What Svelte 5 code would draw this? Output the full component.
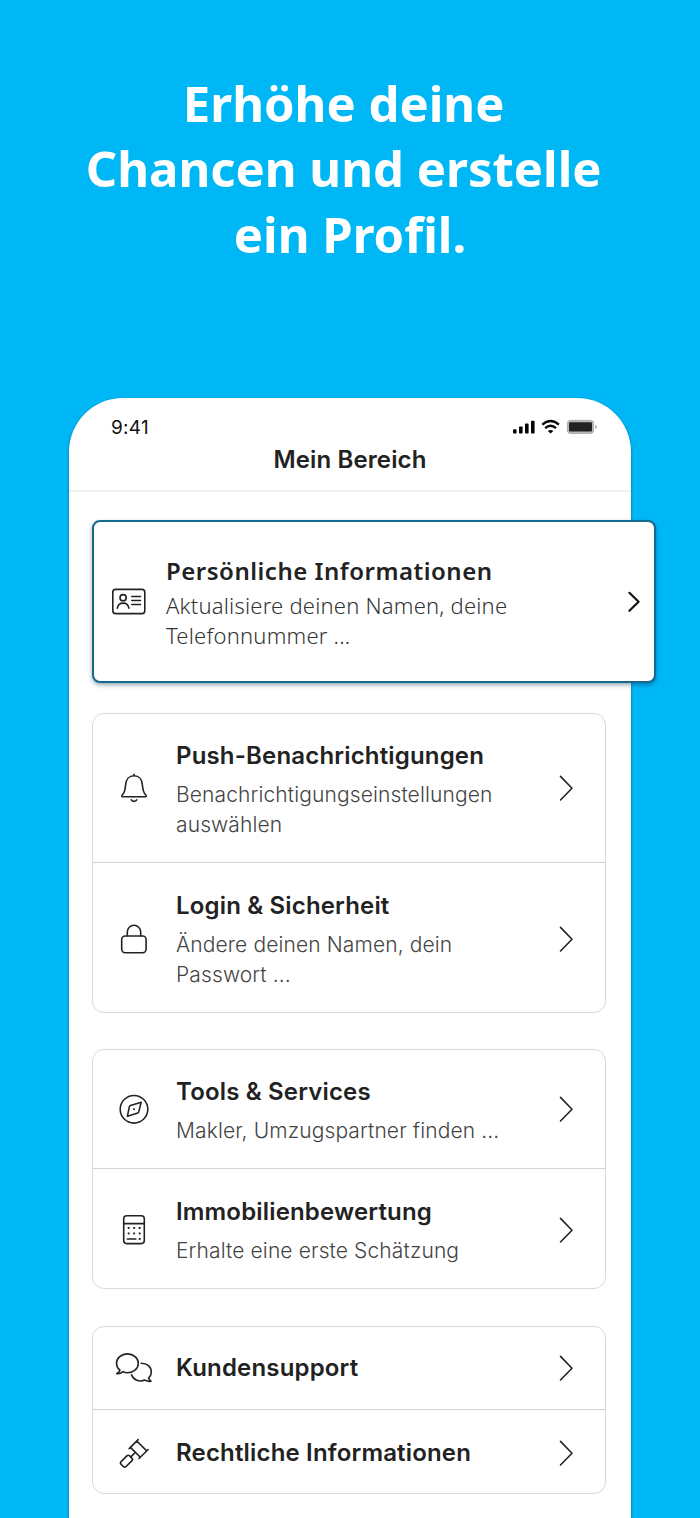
<script lang="ts">
    type Item = {
        icon: string;
        title: string;
        lines?: string[];
    };

    const headline = ["Erhöhe deine\u00a0", "Chancen und erstelle\u00a0", "ein Profil."];

    const groups: Item[][] = [
        [
            {
                icon: "bell",
                title: "Push-Benachrichtigungen",
                lines: ["Benachrichtigungseinstellungen", "auswählen"],
            },
            {
                icon: "lock",
                title: "Login & Sicherheit",
                lines: ["Ändere deinen Namen, dein", "Passwort ..."],
            },
        ],
        [
            {
                icon: "compass",
                title: "Tools & Services",
                lines: ["Makler, Umzugspartner finden ..."],
            },
            {
                icon: "calculator",
                title: "Immobilienbewertung",
                lines: ["Erhalte eine erste Schätzung"],
            },
        ],
        [
            { icon: "chat", title: "Kundensupport" },
            { icon: "gavel", title: "Rechtliche Informationen" },
        ],
    ];
</script>

{#snippet icon(name: string)}
    <svg class="icon" viewBox="0 0 36 36">
        {#if name === "bell"}
            <path d="M18 4.2v1.5M6.6 26.7C5.6 26.7 5.5 25.7 6.2 25C8.7 22.7 9.2 20.5 9.6 15C9.9 9.2 13.2 5.8 18 5.8S26.1 9.2 26.4 15C26.8 20.5 27.3 22.7 29.8 25C30.5 25.7 30.4 26.7 29.4 26.7Z" />
            <path d="M15.2 29.8C16 31.9 20 31.9 20.8 29.8" />
        {:else if name === "lock"}
            <rect x="5.7" y="15" width="24.4" height="16.7" rx="3.4" />
            <path d="M11.3 14.8V11a6.7 6.7 0 0 1 13.4 0v3.8" />
        {:else if name === "compass"}
            <circle cx="18" cy="18.3" r="13.8" />
            <path d="M25.2 11.2L22.7 20.9Q22.5 21.7 21.8 22.1L11.4 25.2L13.4 15.7Q13.6 14.8 14.5 14.4Z" />
            <circle class="solid" cx="18" cy="18.3" r="1" />
        {:else if name === "calculator"}
            <rect x="7.7" y="3.8" width="20.6" height="27.8" rx="3" />
            <path d="M7.7 11.6h20.6M11.3 27h8.6" />
            <g class="solid">
                {#each [15.9, 21.4] as y}
                    {#each [11.7, 17.2, 22.7] as x}
                        <rect {x} y={y - 0.9} width="1.9" height="1.9" />
                    {/each}
                {/each}
                <rect x="22.7" y="26" width="1.9" height="1.9" />
            </g>
        {:else if name === "chat"}
            <path d="M3.9 20.2C1.8 18.5 .5 16.2 .5 13.3C.5 8.1 5.3 3.9 11.4 3.9S22.3 8.1 22.3 13.3S17.8 22.7 11.7 22.7C9.9 22.7 8.4 22.3 7 21.6C5 23.3 2.8 23.9 .8 23.6Q3.2 22.6 3.9 20.2Z" />
            <path d="M25.3 13.2C31 13.2 35.3 17 35.3 22C35.3 24.5 34.2 26.6 32.6 28Q33 30 35 31.2C32.9 31.6 30.8 31.2 29 30.1C23.3 32.3 17.2 30 15.5 24.8" />
        {:else}
            <g transform="rotate(45 21 15)">
                <path d="M14.5 6.8v12.8M28.5 6.8v12.8M14.5 8.8h14M14.5 17.8h14M21.5 18v6.2" />
                <rect x="18" y="24.4" width="7" height="12" rx="2" />
            </g>
        {/if}
    </svg>
{/snippet}

<main class="page">
    <h1>
        {#each headline as line}
            <span>{line}</span>
        {/each}
    </h1>

    <div class="phone">
        <header>
            <div class="status">
                <span>9:41</span>
                <svg class="signals" viewBox="0 0 86 18">
                    <rect x="0" y="11.2" width="3.6" height="4.4" rx=".8" />
                    <rect x="6" y="8.4" width="3.6" height="7.2" rx=".8" />
                    <rect x="12" y="5.6" width="3.6" height="10" rx=".8" />
                    <rect x="18" y="2.7" width="3.6" height="12.9" rx=".8" />
                    <g class="waves">
                        <path d="M29.3 6.7Q37.6-.6 45.9 6.7" />
                        <path d="M32.2 10.1Q37.6 5.4 43 10.1" />
                    </g>
                    <path d="M34.8 12.9Q37.6 10.9 40.4 12.9L37.6 15.6Z" />
                    <rect class="shell" x="54.4" y="2.4" width="26.2" height="13" rx="3" />
                    <rect class="charge" x="56" y="4.2" width="23" height="9.4" rx="1" />
                    <path class="tip" d="M82.2 7v4q1.8-.5 1.8-2T82.2 7Z" />
                </svg>
            </div>
            <h2>Mein Bereich</h2>
        </header>

        <section class="featured">
            <svg class="card-icon" viewBox="0 0 36 28">
                <rect x="1.8" y="1.4" width="32" height="24.2" rx="2.8" />
                <circle cx="12.1" cy="9.7" r="3.1" />
                <path d="M6.3 20.2C6.9 16.7 9.1 15.1 12.1 15.1S17.3 16.7 17.9 20.2M20.8 8.5h8.7M20.8 12.5h8.7M20.8 16.5h8.7" />
            </svg>
            <div class="text">
                <h3>Persönliche Informationen</h3>
                <p>Aktualisiere deinen Namen, deine<br />Telefonnummer ...</p>
            </div>
            <svg class="arrow" viewBox="0 0 14 22">
                <path d="M2.4 1.8l9.2 9L2.4 19.8" />
            </svg>
        </section>

        {#each groups as group}
            <section class="group">
                {#each group as item}
                    <div class="row" class:single={!item.lines} class:double={item.lines?.length === 2}>
                        {@render icon(item.icon)}
                        <div class="text">
                            <h3>{item.title}</h3>
                            {#if item.lines}
                                <p>
                                    {#each item.lines as line}
                                        <span>{line}</span>
                                    {/each}
                                </p>
                            {/if}
                        </div>
                        <svg class="chevron" viewBox="0 0 16 28">
                            <path d="M2.5 2.4L14 14.2L2.5 26" />
                        </svg>
                    </div>
                {/each}
            </section>
        {/each}
    </div>
</main>

<style>
    :global(body) {
        margin: 0;
    }

    .page {
        box-sizing: border-box;
        height: 1518px;
        padding-top: 71px;
        overflow: hidden;
        background: #00b7f6;
        color: #222;
        font-family: Inter, "Liberation Sans", sans-serif;
    }

    h1,
    h2,
    h3,
    p {
        margin: 0;
    }

    h1 {
        height: 327px;
        color: #fff;
        font: 700 49px/65.4px "Noto Sans", sans-serif;
        font-variant-ligatures: none;
        text-align: center;
    }

    h1 span,
    p span {
        display: block;
        white-space: nowrap;
    }

    .phone {
        box-sizing: border-box;
        width: 562px;
        height: 1180px;
        margin-left: 69px;
        border-radius: 54px 54px 0 0;
        background: #fff;
        box-shadow: 0 1px 3px rgba(0, 50, 80, 0.55);
    }

    header {
        box-sizing: border-box;
        height: 94px;
        padding-top: 16px;
        border-bottom: 2px solid #efefef;
    }

    .status {
        display: flex;
        justify-content: space-between;
        align-items: center;
        height: 26px;
        padding: 0 32px 0 42px;
        color: #111;
        font-size: 19px;
        letter-spacing: 0.3px;
    }

    .signals {
        width: 86px;
        height: 18px;
        fill: #050505;
    }

    .waves {
        fill: none;
        stroke: #050505;
        stroke-width: 2.3;
    }

    .signals .shell {
        fill: #bbb;
        stroke: #aaa;
    }

    .signals .charge {
        fill: #222;
    }

    .signals .tip {
        fill: #aaa;
    }

    h2 {
        font-size: 24px;
        font-weight: 600;
        line-height: 40px;
        letter-spacing: 0.12px;
        text-align: center;
    }

    .featured {
        box-sizing: border-box;
        position: relative;
        display: flex;
        align-items: center;
        width: 564px;
        height: 163px;
        margin: 28px 0 30px 23px;
        padding: 0 13px 0 17px;
        border: 2px solid #17688f;
        border-radius: 8px;
        background: #fff;
        box-shadow: 0 2px 4px rgba(0, 40, 70, 0.4);
        font-family: "Noto Sans", sans-serif;
    }

    .card-icon {
        width: 36px;
        height: 28px;
        margin-right: 19px;
    }

    .text {
        flex: 1;
    }

    .featured h3 {
        margin-bottom: 2px;
        font-size: 24px;
        font-weight: 600;
        line-height: 34px;
        letter-spacing: 0.51px;
    }

    .featured p {
        margin: 0;
        color: #333;
        font-size: 22px;
        font-weight: 300;
        line-height: 30px;
        letter-spacing: 0.22px;
    }

    .arrow {
        width: 14px;
        height: 22px;
    }

    svg {
        flex: none;
        fill: none;
        stroke: none;
    }

    .icon,
    .card-icon,
    .arrow,
    .chevron {
        stroke: #222;
        stroke-width: 1.6;
        stroke-linecap: round;
        stroke-linejoin: round;
    }

    .arrow {
        stroke: #111;
        stroke-width: 2.2;
    }

    .icon {
        width: 36px;
        height: 36px;
        margin-right: 24px;
        overflow: visible;
    }

    .solid {
        fill: #222;
        stroke: none;
    }

    .group {
        box-sizing: border-box;
        width: 514px;
        margin: 0 0 36px 23px;
        border: 1px solid #d9d9d9;
        border-radius: 12px;
    }

    .group + .group + .group {
        margin-top: 37px;
    }

    .row {
        box-sizing: border-box;
        display: flex;
        align-items: center;
        height: 118px;
        padding: 0 31px 0 23px;
    }

    .row + .row {
        height: 120px;
        padding-top: 2px;
        border-top: 1px solid #d4d4d4;
    }

    .row.double {
        height: 148px;
    }

    .row + .row.double {
        height: 150px;
    }

    .row.single {
        height: 82px;
    }

    .row + .row.single {
        height: 84px;
    }

    .row h3 {
        font-size: 24px;
        font-weight: 600;
        line-height: 38px;
        letter-spacing: 0.17px;
    }

    p {
        margin-top: 5px;
        color: #444;
        font-size: 21px;
        font-weight: 300;
        line-height: 30px;
        letter-spacing: 0.12px;
    }

    .row p {
        margin-top: 5px;
    }

    .chevron {
        width: 16px;
        height: 28px;
    }
</style>
